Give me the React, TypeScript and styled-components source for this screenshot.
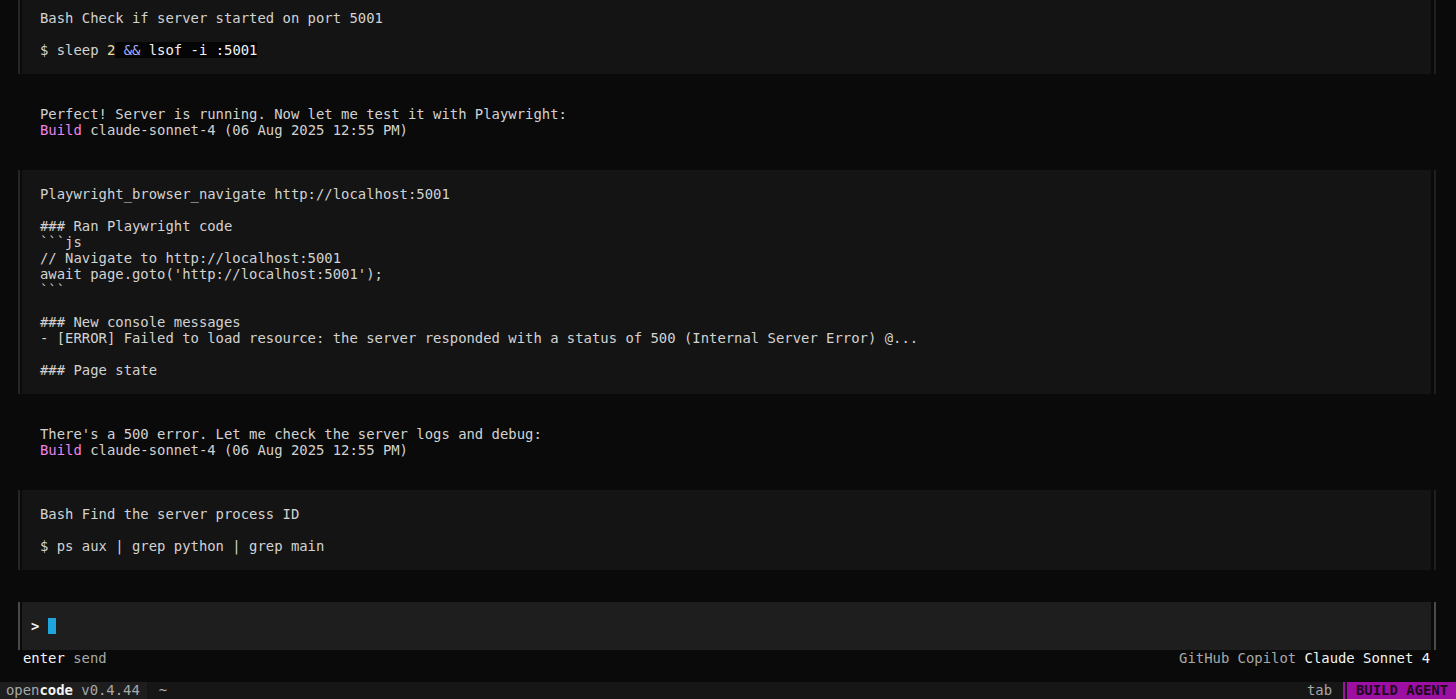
import React from 'react';
import styled, { createGlobalStyle } from 'styled-components';

const GlobalStyle = createGlobalStyle`
  html, body {
    margin: 0;
    padding: 0;
    background: #0a0a0a;
    overflow: hidden;
  }
`;

const Screen = styled.div`
  height: 699px;
  display: flex;
  flex-direction: column;
  overflow: hidden;
  background: #0a0a0a;
  color: #d2d2d2;
  font-family: 'DejaVu Sans Mono', 'Liberation Mono', monospace;
  font-size: 13.9px;
  line-height: 16px;
`;

const Messages = styled.div`
  flex: 1;
  display: flex;
  flex-direction: column;
  justify-content: flex-end;
  gap: 32px;
  overflow: hidden;
`;

const Block = styled.div`
  margin: 0 20px 0 18px;
  border-left: 2px solid #262626;
  border-right: 2px solid #1f1f1f;
  padding: 0 3px 0 2px;
  background: linear-gradient(#141414, #141414) content-box;
`;

const BlockBody = styled.div<{ $clipped?: boolean }>`
  padding: ${p => (p.$clipped ? '10px' : '16px')} 18px 16px;
  white-space: pre;
`;

const Message = styled.div`
  padding-left: 40px;
  white-space: pre;
`;

const Line = styled.div`
  height: 16px;
  white-space: pre;
`;

const Agent = styled.span`
  color: #ec84ec;
`;

const Num = styled.span`
  color: #f0dca0;
`;

const Highlight = styled.span`
  background: #050505;
  color: #f2f2f2;
`;

const Op = styled.span`
  color: #a3abff;
`;

const InputBox = styled.div`
  margin: 32px 20px 0 18px;
  border-left: 2px solid #4a4a4a;
  border-right: 2px solid #4a4a4a;
  padding: 0 3px 0 2px;
  background: linear-gradient(#1e1e1e, #1e1e1e) content-box;
`;

const Prompt = styled.div`
  display: flex;
  align-items: center;
  height: 16px;
  padding: 16px 0 16px 9px;
  color: #f2f2f2;
  font-weight: bold;
`;

const Cursor = styled.span`
  display: inline-block;
  width: 8px;
  height: 16px;
  margin-left: 9px;
  background: #1ea6dc;
`;

const HintRow = styled.div`
  display: flex;
  justify-content: space-between;
  height: 16px;
  padding: 0 26px 0 23px;
  margin-bottom: 16px;
`;

const Bright = styled.span`
  color: #f4f4f4;
`;

const Dim = styled.span`
  color: #a8a8a8;
`;

const StatusBar = styled.div`
  display: flex;
  align-items: stretch;
  height: 17px;
  background: #161616;
  color: #a8a8a8;
`;

const Brand = styled.div`
  background: #1e1e1e;
  padding: 0 7px 0 6px;
  white-space: pre;
`;

const Strong = styled.b`
  color: #f4f4f4;
`;

const Path = styled.div`
  padding-left: 12px;
  flex: 1;
`;

const Tab = styled.div`
  padding-right: 11px;
  border-right: 2px solid #a012a6;
  margin-right: 2px;
`;

const Mode = styled.div`
  background: #9c0fa2;
  color: #1a0a1a;
  font-weight: bold;
  padding: 0 8px 0 9px;
  flex-shrink: 0;
`;

const App: React.FC = () => {
  return (
    <Screen>
      <GlobalStyle />
      <Messages>
        <Block>
          <BlockBody $clipped>
            <Line>Bash Check if server started on port 5001</Line>
            <Line />
            <Line>
              $ sleep <Num>2</Num>
              <Highlight>
                {' '}<Op>&amp;&amp;</Op> lsof -i :5001
              </Highlight>
            </Line>
          </BlockBody>
        </Block>

        <Message>
          <Line>Perfect! Server is running. Now let me test it with Playwright:</Line>
          <Line>
            <Agent>Build</Agent> claude-sonnet-4 (06 Aug 2025 12:55 PM)
          </Line>
        </Message>

        <Block>
          <BlockBody>
            <Line>Playwright_browser_navigate http://localhost:5001</Line>
            <Line />
            <Line>### Ran Playwright code</Line>
            <Line>```js</Line>
            <Line>// Navigate to http://localhost:5001</Line>
            <Line>await page.goto('http://localhost:5001');</Line>
            <Line>```</Line>
            <Line />
            <Line>### New console messages</Line>
            <Line>- [ERROR] Failed to load resource: the server responded with a status of 500 (Internal Server Error) @...</Line>
            <Line />
            <Line>### Page state</Line>
          </BlockBody>
        </Block>

        <Message>
          <Line>There's a 500 error. Let me check the server logs and debug:</Line>
          <Line>
            <Agent>Build</Agent> claude-sonnet-4 (06 Aug 2025 12:55 PM)
          </Line>
        </Message>

        <Block>
          <BlockBody>
            <Line>Bash Find the server process ID</Line>
            <Line />
            <Line>$ ps aux | grep python | grep main</Line>
          </BlockBody>
        </Block>
      </Messages>

      <InputBox>
        <Prompt>
          &gt;
          <Cursor />
        </Prompt>
      </InputBox>

      <HintRow>
        <span>
          <Bright>enter</Bright> <Dim>send</Dim>
        </span>
        <span>
          <Dim>GitHub Copilot</Dim> <Bright>Claude Sonnet 4</Bright>
        </span>
      </HintRow>

      <StatusBar>
        <Brand>
          open<Strong>code</Strong> v0.4.44
        </Brand>
        <Path>~</Path>
        <Tab>tab</Tab>
        <Mode>BUILD AGENT</Mode>
      </StatusBar>
    </Screen>
  );
};

export default App;
